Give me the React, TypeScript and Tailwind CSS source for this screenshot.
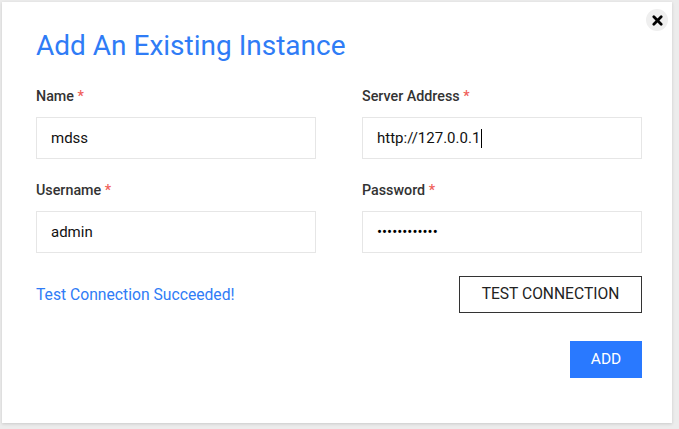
import { useState } from 'react';

const FONT = { fontFamily: 'Roboto, "Liberation Sans", sans-serif' };

function Field({ label, value, type = 'text', caret = false }: { label: string; value: string; type?: string; caret?: boolean }) {
  return (
    <div className="flex flex-col">
      <label className="text-[14.3px] font-medium text-[#333] leading-[20px] h-[20px]">
        {label} <span className="text-[#f0605a]">*</span>
      </label>
      <div className="mt-[11px] h-[42px] border border-[#e6e6e6] flex items-center px-[14px]">
        {type === 'password' ? (
          <span className="text-[15px] text-black leading-none">{'•'.repeat(12)}</span>
        ) : (
          <span className="text-[15px] text-[#111] flex items-center">
            {value}
            {caret && <span className="inline-block w-px h-[19px] bg-black ml-px" />}
          </span>
        )}
      </div>
    </div>
  );
}

export default function App() {
  const [ok] = useState(true);

  return (
    <div className="w-[679px] h-[429px] bg-[#ececec] p-[2px] pr-[7px] pb-[6px]" style={FONT}>
      <div className="relative h-full bg-white shadow-[0_1px_3px_rgba(0,0,0,0.15)] pl-[34px] pr-[30px] pt-[28px]">
        <button className="absolute right-[4px] top-[7px] w-[22px] h-[22px] rounded-full bg-[#efefef] flex items-center justify-center">
          <svg width="11" height="11" viewBox="0 0 12 12">
            <path d="M2 2 L10 10 M10 2 L2 10" stroke="#000" strokeWidth="3" strokeLinecap="round" />
          </svg>
        </button>

        <h1 className="text-[28px] leading-[32px] text-[#2f7cf6] font-normal">Add An Existing Instance</h1>

        <div className="mt-[24px] grid grid-cols-[280px_280px] gap-x-[46px] gap-y-[21px]">
          <Field label="Name" value="mdss" />
          <Field label="Server Address" value="http://127.0.0.1" caret />
          <Field label="Username" value="admin" />
          <Field label="Password" value="" type="password" />
        </div>

        <div className="mt-[23px] grid grid-cols-[280px_280px] gap-x-[46px] items-center">
          <div className="text-[15.7px] text-[#2f7cf6]">{ok && 'Test Connection Succeeded!'}</div>
          <div className="flex justify-end">
            <button className="w-[183px] h-[37px] border border-[#333] text-[15.6px] text-[#222]">
              TEST CONNECTION
            </button>
          </div>
        </div>

        <div className="mt-[28px] flex justify-end">
          <button className="w-[72px] h-[37px] bg-[#2979ff] text-white text-[15.5px]">ADD</button>
        </div>
      </div>
    </div>
  );
}
